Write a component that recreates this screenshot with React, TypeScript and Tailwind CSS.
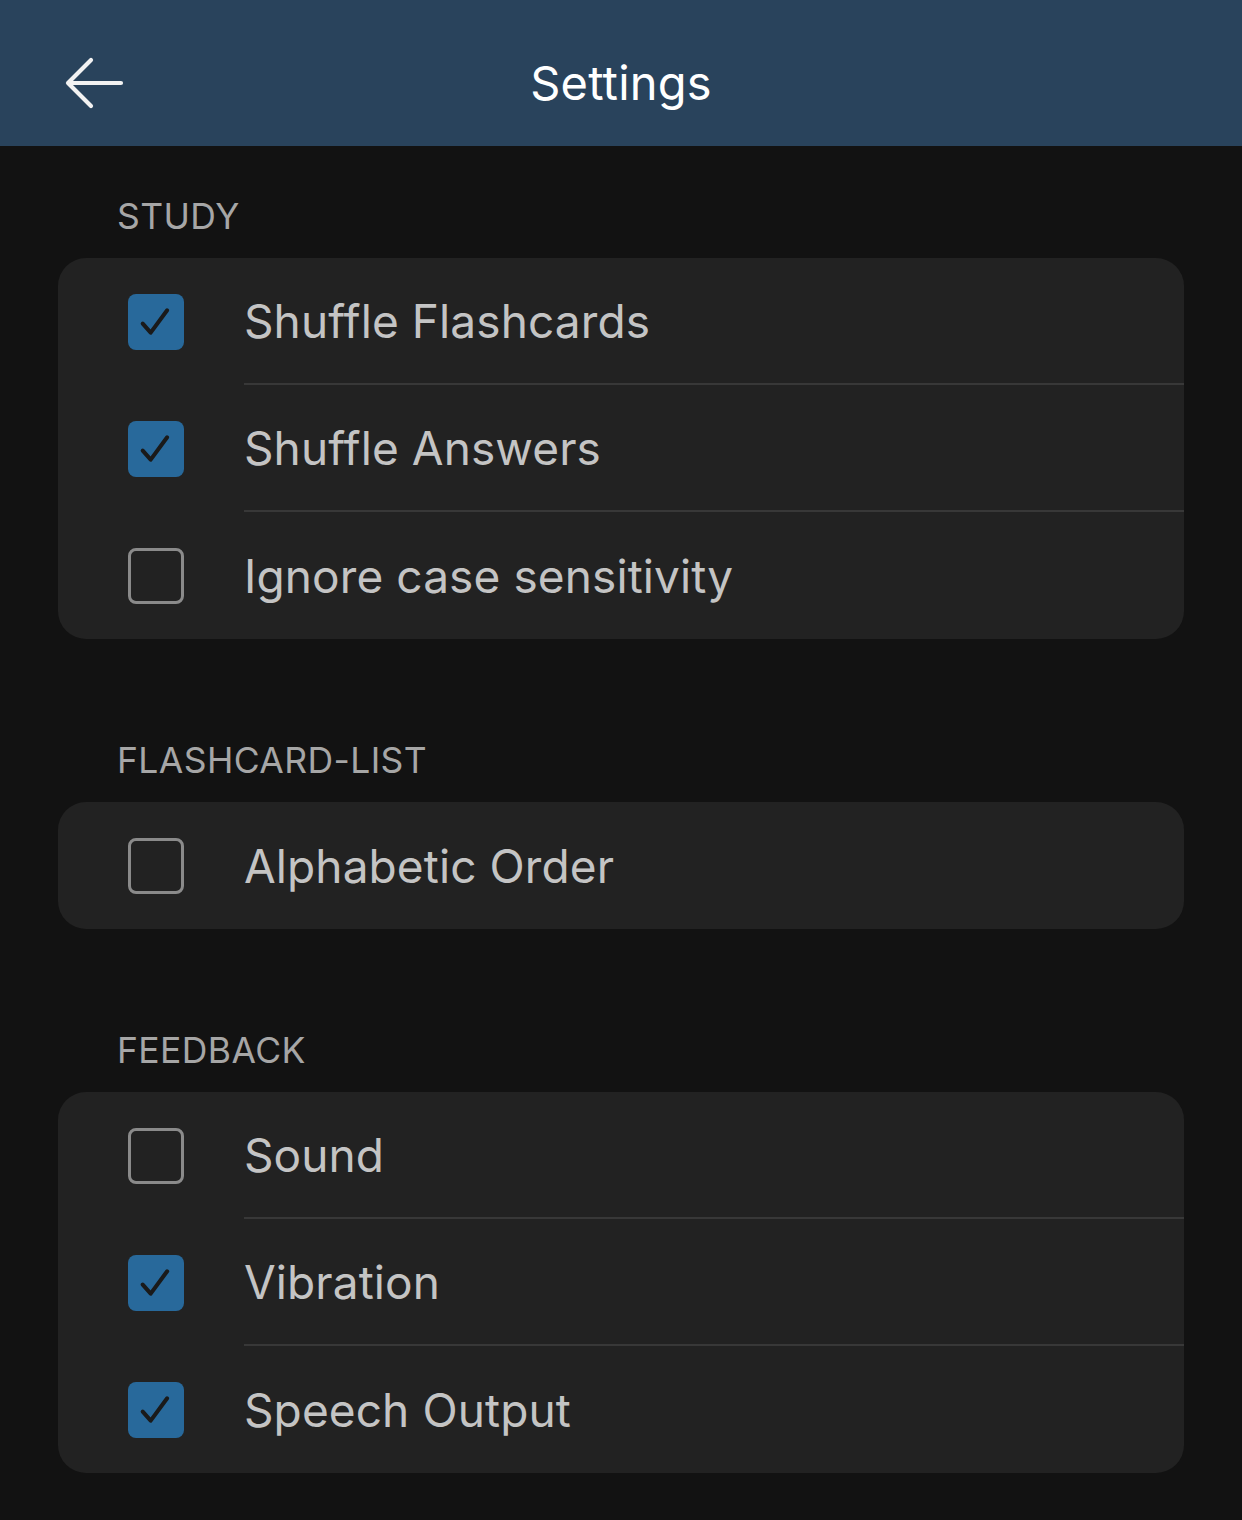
import React from "react";

type Item = { label: string; checked: boolean };
type Section = { title: string; items: Item[] };

const sections: Section[] = [
  {
    title: "STUDY",
    items: [
      { label: "Shuffle Flashcards", checked: true },
      { label: "Shuffle Answers", checked: true },
      { label: "Ignore case sensitivity", checked: false },
    ],
  },
  {
    title: "FLASHCARD-LIST",
    items: [{ label: "Alphabetic Order", checked: false }],
  },
  {
    title: "FEEDBACK",
    items: [
      { label: "Sound", checked: false },
      { label: "Vibration", checked: true },
      { label: "Speech Output", checked: true },
    ],
  },
];

function Checkbox({ checked }: { checked: boolean }) {
  if (checked) {
    return (
      <div className="w-[56px] h-[56px] rounded-[8px] bg-[#28699b] flex items-center justify-center shrink-0">
        <svg width="34" height="34" viewBox="0 0 32 32" fill="none">
          <path d="M3.5 17.5 L11 26 L26.5 5" stroke="#1a1a1a" strokeWidth="3.8" strokeLinecap="round" strokeLinejoin="round" />
        </svg>
      </div>
    );
  }
  return <div className="w-[56px] h-[56px] rounded-[8px] border-[3px] border-[#8a8a8a] shrink-0" />;
}

export default function App() {
  return (
    <div className="w-[1242px] min-h-[1520px] bg-[#121212]" style={{ fontFamily: "Inter, 'Noto Sans', sans-serif" }}>
      <header className="h-[146px] bg-[#29435c] flex items-center relative">
        <div className="absolute left-[64px] top-[57px]">
          <svg width="62" height="52" viewBox="0 0 62 52" fill="none">
            <path d="M57 26 H4 M27 3 L4 26 L27 49" stroke="#f2f2f2" strokeWidth="4.2" strokeLinecap="round" strokeLinejoin="round" />
          </svg>
        </div>
        <h1 className="w-full text-center text-white text-[47px] leading-none tracking-[0.2px] pt-[18px]">Settings</h1>
      </header>
      <main className="px-[58px] pt-[48px] flex flex-col gap-[99px]">
        {sections.map((s) => (
          <section key={s.title} className="flex flex-col">
            <div className="pl-[59px] pt-[3px] text-[#a6a6a6] text-[35.5px] leading-[40px] tracking-[0.4px] h-[64px]">{s.title}</div>
            <div className="bg-[#222222] rounded-[28px] overflow-hidden">
              {s.items.map((it, i) => (
                <div key={it.label} className="flex items-center h-[127px]">
                  <div className="pl-[70px] pr-[60px] flex items-center">
                    <Checkbox checked={it.checked} />
                  </div>
                  <div className={`flex-1 h-full flex items-center ${i < s.items.length - 1 ? "border-b-[2px] border-[#383838]" : ""}`}>
                    <span className="text-[#c4c4c4] text-[46px] leading-none tracking-[0.1px]">{it.label}</span>
                  </div>
                </div>
              ))}
            </div>
          </section>
        ))}
      </main>
    </div>
  );
}
